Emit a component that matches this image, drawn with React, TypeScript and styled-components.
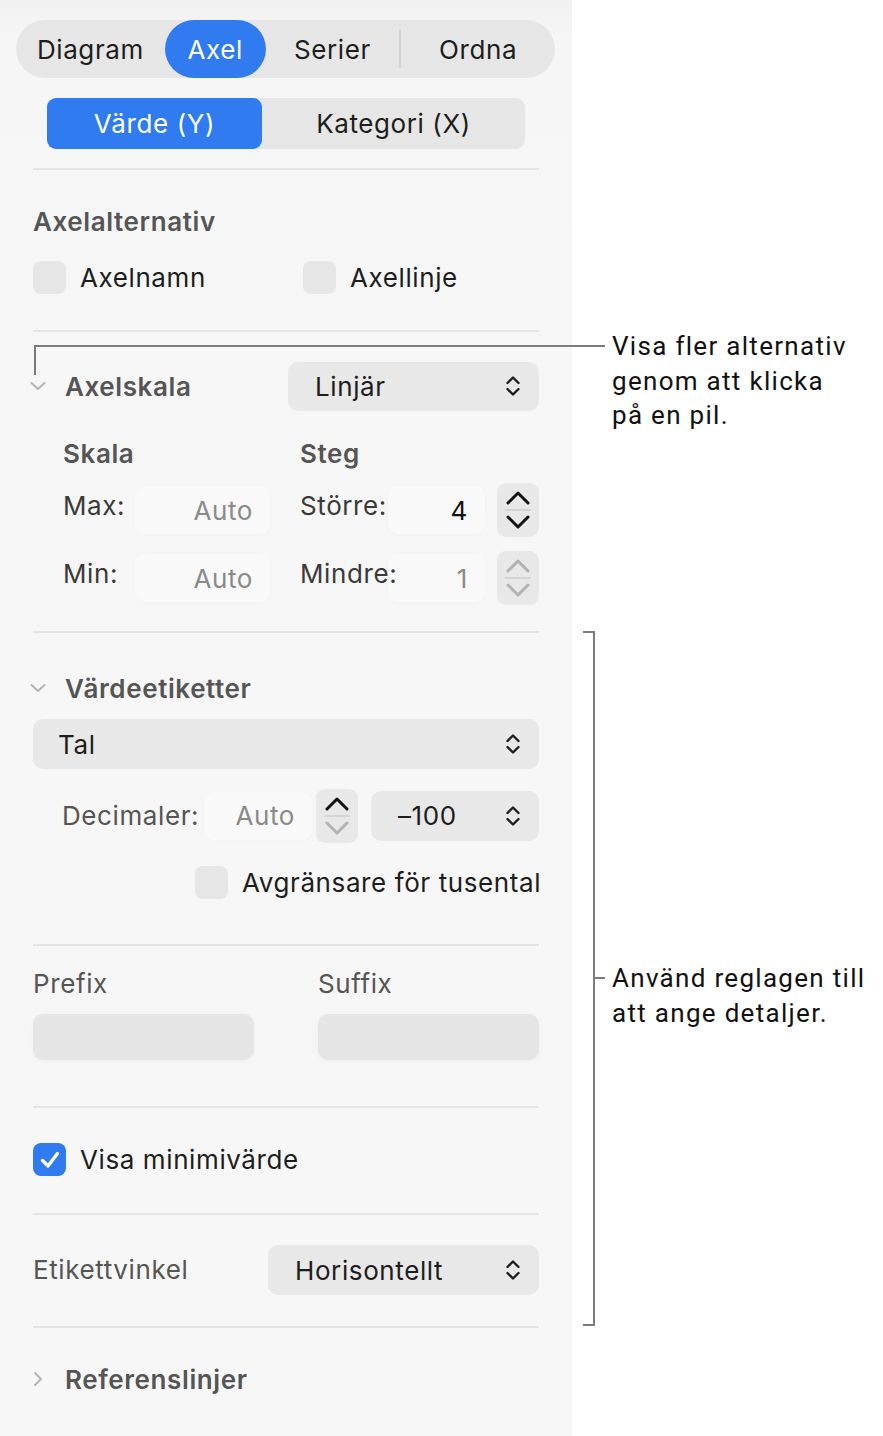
import styled, { createGlobalStyle } from 'styled-components';

const GlobalStyle = createGlobalStyle`
  html, body {
    margin: 0;
    padding: 0;
    background: #ffffff;
  }
  body {
    font-family: Inter, "Liberation Sans", sans-serif;
    font-size: 26px;
    letter-spacing: 0.6px;
    -webkit-font-smoothing: antialiased;
  }
`;

const Page = styled.div`
  position: relative;
  display: flex;
  width: 883px;
  height: 1436px;
  overflow: hidden;
`;

const Panel = styled.div`
  width: 572px;
  height: 100%;
  box-sizing: border-box;
  padding: 20px 33px 0 33px;
  background: linear-gradient(#f1f1f1 0px, #f6f6f6 40px, #f7f7f7 100%);
  display: flex;
  flex-direction: column;
`;

const TabBar = styled.div`
  display: flex;
  align-items: center;
  height: 58px;
  margin: 0 -16px 0 -17px;
  border-radius: 29px;
  background: #e6e6e6;
`;

const Tab = styled.div<{ $w: number; $active?: boolean }>`
  width: ${(p) => p.$w}px;
  height: 58px;
  display: flex;
  align-items: center;
  justify-content: center;
  border-radius: 29px;
  color: ${(p) => (p.$active ? '#ffffff' : '#1d1d1d')};
  background: ${(p) => (p.$active ? '#2f7bef' : 'transparent')};
`;

const TabDivider = styled.div`
  width: 2px;
  height: 38px;
  background: #d2d2d2;
`;

const Segmented = styled.div`
  display: flex;
  height: 51px;
  margin: 20px 0 0 14px;
  width: 478px;
  border-radius: 9px;
  background: #e6e6e6;
`;

const Segment = styled.div<{ $w: number; $active?: boolean }>`
  width: ${(p) => p.$w}px;
  display: flex;
  align-items: center;
  justify-content: center;
  border-radius: 9px;
  color: ${(p) => (p.$active ? '#ffffff' : '#1d1d1d')};
  background: ${(p) => (p.$active ? '#2f7bef' : 'transparent')};
`;

const Divider = styled.div<{ $top: number }>`
  height: 2px;
  margin-top: ${(p) => p.$top}px;
  background: #e4e4e4;
  flex-shrink: 0;
`;

const Heading = styled.div<{ $top: number }>`
  margin-top: ${(p) => p.$top}px;
  height: 30px;
  line-height: 30px;
  font-weight: 600;
  color: #555555;
`;

const CheckRow = styled.div<{ $top: number; $indent?: number }>`
  display: flex;
  align-items: center;
  margin-top: ${(p) => p.$top}px;
  padding-left: ${(p) => p.$indent ?? 0}px;
  height: 33px;
`;

const CheckItem = styled.div<{ $w?: number }>`
  display: flex;
  align-items: center;
  gap: 14px;
  width: ${(p) => (p.$w ? `${p.$w}px` : 'auto')};
  color: #1d1d1d;
  white-space: nowrap;
`;

const Box = styled.div<{ $checked?: boolean }>`
  width: 33px;
  height: 33px;
  border-radius: 8px;
  background: ${(p) => (p.$checked ? '#2f7bef' : '#e6e6e6')};
  display: flex;
  align-items: center;
  justify-content: center;
  flex-shrink: 0;
`;

const DisclosureRow = styled.div<{ $top: number }>`
  display: flex;
  align-items: center;
  margin-top: ${(p) => p.$top}px;
  margin-left: -4px;
  height: 50px;
`;

const Twisty = styled.div`
  width: 36px;
  height: 20px;
  display: flex;
  align-items: center;
`;

const DisclosureTitle = styled.div`
  flex: 1;
  font-weight: 600;
  color: #555555;
`;

const Popup = styled.div<{ $w?: number; $h?: number; $pl?: number }>`
  width: ${(p) => (p.$w ? `${p.$w}px` : '100%')};
  height: ${(p) => p.$h ?? 50}px;
  box-sizing: border-box;
  padding: 0 18px 0 ${(p) => p.$pl ?? 27}px;
  border-radius: 10px;
  background: #e8e8e8;
  display: flex;
  align-items: center;
  justify-content: space-between;
  color: #1d1d1d;
  flex-shrink: 0;
`;

const ScaleGrid = styled.div`
  display: grid;
  grid-template-columns: 237px 239px;
  grid-template-rows: 30px 54px 54px;
  margin-top: 28px;
  padding-left: 30px;
  row-gap: 14px;
`;

const ColHead = styled.div`
  line-height: 30px;
  font-weight: 600;
  color: #555555;
  margin-bottom: -1px;
`;

const FieldRow = styled.div`
  display: flex;
  align-items: center;
  height: 54px;
`;

const FieldLabel = styled.div<{ $w: number }>`
  position: relative;
  z-index: 1;
  width: ${(p) => p.$w}px;
  color: #3a3a3a;
  margin-top: -10px;
  flex-shrink: 0;
  white-space: nowrap;
`;

const NumField = styled.div<{ $w: number; $muted?: boolean }>`
  width: ${(p) => p.$w}px;
  height: 48px;
  box-sizing: border-box;
  padding-right: 17px;
  border-radius: 10px;
  background: #f9f9f9;
  box-shadow: 0 1px 6px rgba(0, 0, 0, 0.018);
  display: flex;
  align-items: center;
  justify-content: flex-end;
  color: ${(p) => (p.$muted ? '#8a8a8a' : '#111111')};
  flex-shrink: 0;
`;

const Stepper = styled.div<{ $ml: number }>`
  width: 42px;
  height: 54px;
  margin-left: ${(p) => p.$ml}px;
  border-radius: 9px;
  background: #e8e8e8;
  display: flex;
  flex-direction: column;
  align-items: center;
  justify-content: center;
  gap: 4px;
  flex-shrink: 0;
`;

const StepSep = styled.div`
  width: 26px;
  height: 2px;
  background: #d4d4d4;
`;

const DecimalRow = styled.div`
  display: flex;
  align-items: center;
  margin-top: 19px;
  padding-left: 29px;
  height: 55px;
`;

const DecimalLabel = styled.div`
  width: 142px;
  color: #555555;
  flex-shrink: 0;
`;

const TwoCols = styled.div`
  display: grid;
  grid-template-columns: 221px 221px;
  column-gap: 64px;
  margin-top: 23px;
`;

const PlainLabel = styled.div`
  height: 30px;
  line-height: 30px;
  color: #555555;
`;

const TextBox = styled.div`
  height: 46px;
  margin-top: 15px;
  border-radius: 10px;
  background: #e5e5e5;
  box-shadow: 0 2px 8px rgba(0, 0, 0, 0.03);
`;

const AngleRow = styled.div`
  display: flex;
  align-items: center;
  justify-content: space-between;
  margin-top: 30px;
  height: 50px;
`;

const Overlay = styled.div`
  position: absolute;
  inset: 0;
  pointer-events: none;
`;

const Callout = styled.div<{ $top: number }>`
  position: absolute;
  left: 612px;
  top: ${(p) => p.$top}px;
  font-family: Roboto, "Open Sans", sans-serif;
  font-size: 26px;
  line-height: 34.5px;
  letter-spacing: 1.3px;
  color: #111111;
`;

const UpDown = () => (
  <svg width="16" height="24" viewBox="0 0 16 24" fill="none">
    <path d="M2.5 9 L8 3.5 L13.5 9" stroke="#1d1d1d" strokeWidth="2.4" strokeLinecap="round" strokeLinejoin="round" />
    <path d="M2.5 15 L8 20.5 L13.5 15" stroke="#1d1d1d" strokeWidth="2.4" strokeLinecap="round" strokeLinejoin="round" />
  </svg>
);

const Chevron = ({ up, color }: { up?: boolean; color: string }) => (
  <svg width="24" height="14" viewBox="0 0 24 14" fill="none">
    <path
      d={up ? 'M2 12 L12 2 L22 12' : 'M2 2 L12 12 L22 2'}
      stroke={color}
      strokeWidth="3"
      strokeLinecap="round"
      strokeLinejoin="round"
    />
  </svg>
);

const StepControl = ({ ml, upOn, downOn }: { ml: number; upOn: boolean; downOn: boolean }) => (
  <Stepper $ml={ml}>
    <Chevron up color={upOn ? '#111111' : '#b2b2b2'} />
    <StepSep />
    <Chevron color={downOn ? '#111111' : '#b2b2b2'} />
  </Stepper>
);

const TwistyIcon = ({ open }: { open: boolean }) => (
  <svg width="18" height="18" viewBox="0 0 18 18" fill="none">
    <path
      d={open ? 'M2.5 6 L9 12 L15.5 6' : 'M6 3 L12 9 L6 15'}
      stroke="#b4b4b4"
      strokeWidth="2"
      strokeLinecap="round"
      strokeLinejoin="round"
    />
  </svg>
);

const Check = () => (
  <svg width="22" height="20" viewBox="0 0 22 20" fill="none">
    <path d="M3.5 10.5 L9 16 L18.5 3.5" stroke="#ffffff" strokeWidth="3.4" strokeLinecap="round" strokeLinejoin="round" />
  </svg>
);

const App = () => {
  return (
    <>
      <GlobalStyle />
      <Page>
        <Panel>
          <TabBar>
            <Tab $w={149}>Diagram</Tab>
            <Tab $w={101} $active>Axel</Tab>
            <Tab $w={134}>Serier</Tab>
            <TabDivider />
            <Tab $w={154}>Ordna</Tab>
          </TabBar>
          <Segmented>
            <Segment $w={215} $active>Värde (Y)</Segment>
            <Segment $w={263}>Kategori (X)</Segment>
          </Segmented>
          <Divider $top={19} />

          <Heading $top={37}>Axelalternativ</Heading>
          <CheckRow $top={24}>
            <CheckItem $w={270}>
              <Box />
              Axelnamn
            </CheckItem>
            <CheckItem>
              <Box />
              Axellinje
            </CheckItem>
          </CheckRow>
          <Divider $top={36} />

          <DisclosureRow $top={29}>
            <Twisty>
              <TwistyIcon open />
            </Twisty>
            <DisclosureTitle>Axelskala</DisclosureTitle>
            <Popup $w={251} $h={49}>
              Linjär
              <UpDown />
            </Popup>
          </DisclosureRow>
          <ScaleGrid>
            <ColHead>Skala</ColHead>
            <ColHead>Steg</ColHead>
            <FieldRow>
              <FieldLabel $w={72}>Max:</FieldLabel>
              <NumField $w={135} $muted>Auto</NumField>
            </FieldRow>
            <FieldRow>
              <FieldLabel $w={88}>Större:</FieldLabel>
              <NumField $w={97}>4</NumField>
              <StepControl ml={12} upOn downOn />
            </FieldRow>
            <FieldRow>
              <FieldLabel $w={72}>Min:</FieldLabel>
              <NumField $w={135} $muted>Auto</NumField>
            </FieldRow>
            <FieldRow>
              <FieldLabel $w={88}>Mindre:</FieldLabel>
              <NumField $w={97} $muted>1</NumField>
              <StepControl ml={12} upOn={false} downOn={false} />
            </FieldRow>
          </ScaleGrid>
          <Divider $top={26} />

          <DisclosureRow $top={30}>
            <Twisty>
              <TwistyIcon open />
            </Twisty>
            <DisclosureTitle>Värdeetiketter</DisclosureTitle>
          </DisclosureRow>
          <Popup $h={50} $pl={25} style={{ marginTop: 6 }}>
            Tal
            <UpDown />
          </Popup>
          <DecimalRow>
            <DecimalLabel>Decimaler:</DecimalLabel>
            <NumField $w={108} $muted>Auto</NumField>
            <StepControl ml={4} upOn downOn={false} />
            <Popup $w={168} $pl={27} style={{ marginLeft: 13 }}>
              –100
              <UpDown />
            </Popup>
          </DecimalRow>
          <CheckRow $top={23} $indent={162}>
            <CheckItem>
              <Box />
              Avgränsare för tusental
            </CheckItem>
          </CheckRow>
          <Divider $top={45} />

          <TwoCols>
            <div>
              <PlainLabel>Prefix</PlainLabel>
              <TextBox />
            </div>
            <div>
              <PlainLabel>Suffix</PlainLabel>
              <TextBox />
            </div>
          </TwoCols>
          <Divider $top={46} />

          <CheckRow $top={35}>
            <CheckItem>
              <Box $checked>
                <Check />
              </Box>
              Visa minimivärde
            </CheckItem>
          </CheckRow>
          <Divider $top={37} />

          <AngleRow>
            <PlainLabel>Etikettvinkel</PlainLabel>
            <Popup $w={271} $pl={27}>
              Horisontellt
              <UpDown />
            </Popup>
          </AngleRow>
          <Divider $top={31} />

          <DisclosureRow $top={26}>
            <Twisty>
              <TwistyIcon open={false} />
            </Twisty>
            <DisclosureTitle>Referenslinjer</DisclosureTitle>
          </DisclosureRow>
        </Panel>

        <Overlay>
          <svg width="883" height="1436" style={{ position: 'absolute', left: 0, top: 0 }}>
            <polyline points="35,375 35,346 605,346" fill="none" stroke="#7b7b7b" strokeWidth="2" />
            <polyline points="583,632 594,632 594,1325 583,1325" fill="none" stroke="#7b7b7b" strokeWidth="2" />
            <line x1="594" y1="978" x2="605" y2="978" stroke="#7b7b7b" strokeWidth="2" />
          </svg>
          <Callout $top={329}>
            Visa fler alternativ
            <br />
            genom att klicka
            <br />
            på en pil.
          </Callout>
          <Callout $top={961}>
            Använd reglagen till
            <br />
            att ange detaljer.
          </Callout>
        </Overlay>
      </Page>
    </>
  );
};

export default App;
